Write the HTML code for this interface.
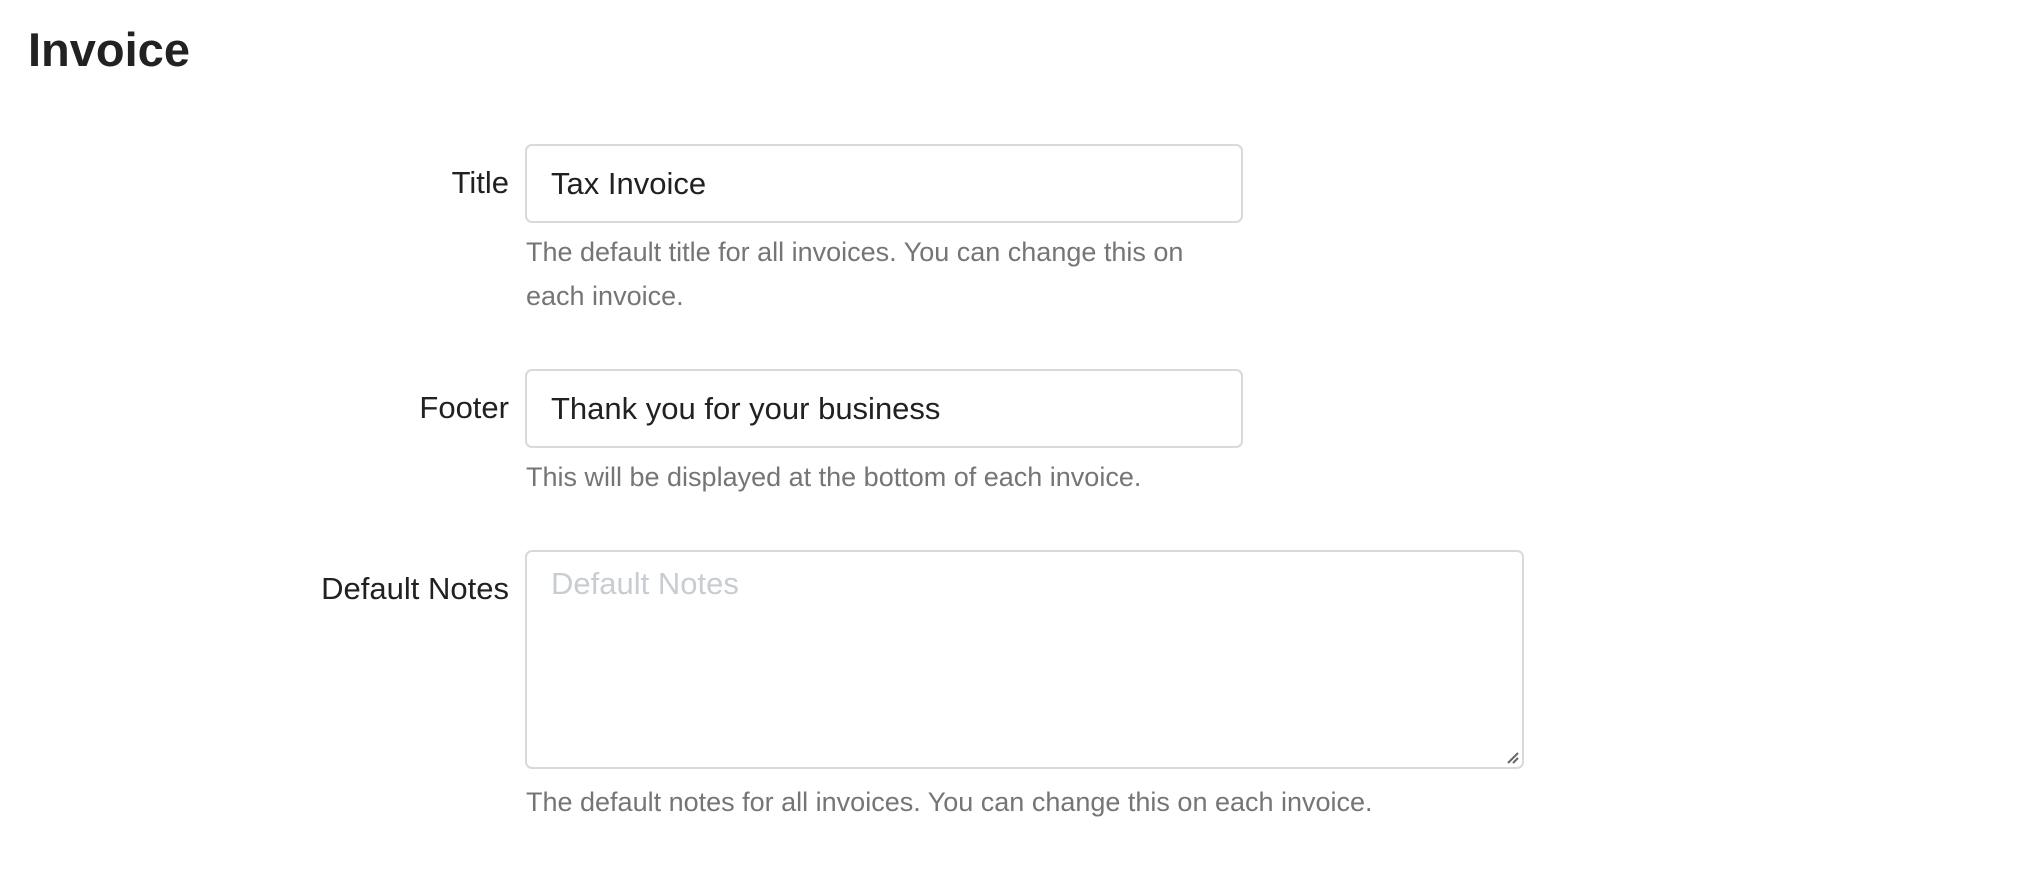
<!DOCTYPE html>
<html><head><meta charset="utf-8"><style>
html,body{margin:0;padding:0;background:#fff;width:2032px;height:880px;overflow:hidden;font-family:"Liberation Sans",sans-serif;}
h1{position:absolute;left:28px;top:18px;margin:0;font-size:47px;font-weight:bold;color:#222;line-height:64px;}
.lbl{position:absolute;right:calc(2032px - 509px);font-size:31px;color:#212121;line-height:40px;white-space:nowrap;}
.box{position:absolute;left:525px;border:2px solid #d9d9d9;border-radius:7px;box-sizing:border-box;background:#fff;}
.val{position:absolute;left:24px;font-size:31px;color:#212121;line-height:40px;white-space:nowrap;}
.help{position:absolute;left:526px;font-size:27px;color:#757575;line-height:44px;white-space:nowrap;}
</style></head><body>
<h1>Invoice</h1>

<div class="lbl" style="top:163px">Title</div>
<div class="box" style="top:144px;width:718px;height:79px"><div class="val" style="top:18px">Tax Invoice</div></div>
<div class="help" style="top:230px">The default title for all invoices. You can change this on<br>each invoice.</div>

<div class="lbl" style="top:388px">Footer</div>
<div class="box" style="top:369px;width:718px;height:79px"><div class="val" style="top:18px">Thank you for your business</div></div>
<div class="help" style="top:455px">This will be displayed at the bottom of each invoice.</div>

<div class="lbl" style="top:569px">Default Notes</div>
<div class="box" style="top:550px;width:999px;height:219px"><div class="val" style="top:12px;color:#c8cdd3">Default Notes</div>
<svg style="position:absolute;right:2px;bottom:2px" width="16" height="16"><path d="M4 14L14 4M9 14L14 9" stroke="#666" stroke-width="2"/></svg></div>
<div class="help" style="top:780px">The default notes for all invoices. You can change this on each invoice.</div>
</body></html>
